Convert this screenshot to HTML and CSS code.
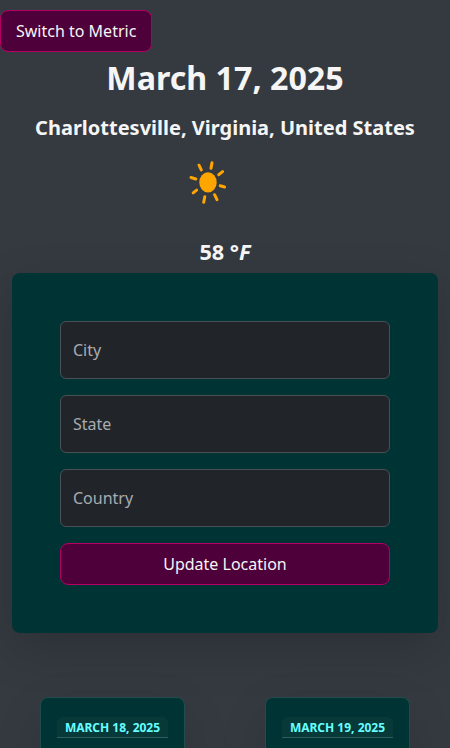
FILE: index.html
```
<!DOCTYPE html>
<html lang="en">
<head>
<meta charset="utf-8">
<meta name="viewport" content="width=device-width, initial-scale=1">
<title>Weather Forecast</title>
<link rel="stylesheet" href="styles.css">
</head>
<body>
<button class="btn unit-toggle" type="button">Switch to Metric</button>
<main>
  <section class="current">
    <h1>March 17, 2025</h1>
    <h2>Charlottesville, Virginia, United States</h2>
    <svg class="sun" width="60" height="60" viewBox="180 150 60 60" aria-hidden="true">
      <ellipse cx="208" cy="182.4" rx="8.7" ry="10.2"/>
      <path d="M212 162.7L211 168.2M222.6 171.6L218.8 174.7M220.2 185.7L224.6 187M214.6 194.7L217 199.6M204.8 196.8L203.7 202.2M196.6 190.2L193.2 192.9M195.8 179L191 177.5M199 165.2L201.3 169.9"/>
    </svg>
    <p class="temperature">58 °<em>F</em></p>
  </section>
  <form class="location">
    <input type="text" placeholder="City" aria-label="City">
    <input type="text" placeholder="State" aria-label="State">
    <input type="text" placeholder="Country" aria-label="Country">
    <button class="btn" type="button">Update Location</button>
  </form>
  <section class="forecast">
    <article class="day"><h3>March 18, 2025</h3></article>
    <article class="day"><h3>March 19, 2025</h3></article>
  </section>
</main>
</body>
</html>
```
FILE: styles.css
```
* { box-sizing: border-box; }
html, body { height: 100%; }
body {
  margin: 0;
  padding-top: 10px;
  overflow: hidden;
  background: #353a41;
  color: #f5f5f5;
  font: 16px/24px "Noto Sans", sans-serif;
}
.btn {
  display: block;
  height: 42px;
  padding: 0 15px;
  border: 1px solid #b30062;
  border-radius: 8px;
  background: #4d0039;
  color: #f5f5f5;
  font: inherit;
}
.current {
  display: flex;
  flex-direction: column;
  align-items: center;
  height: 221px;
}
h1, h2, h3, p { margin: 0; }
h1 { margin-top: 7px; font-size: 32.2px; line-height: 38px; }
h2 { margin-top: 19px; font-size: 20px; line-height: 24px; }
.sun {
  margin: 10px 30px 0 0;
  fill: #ffa500;
}
.sun path { stroke: #ffa500; stroke-width: 3; stroke-linecap: round; }
.temperature { margin-top: 29px; font-size: 21.7px; line-height: 26px; font-weight: 700; }
.location {
  display: flex;
  flex-direction: column;
  gap: 16px;
  height: 360px;
  margin: 0 12px;
  padding: 48px;
  border-radius: 8px;
  background: #003333;
  box-shadow: 0 16px 48px rgba(0, 0, 0, .176);
}
.location input {
  width: 100%;
  height: 58px;
  padding: 0 12px;
  border: 1px solid #495057;
  border-radius: 6px;
  background: #212529;
  color: #dee2e6;
  font: inherit;
}
.location input::placeholder { color: #a7acb1; opacity: 1; }
.forecast {
  display: grid;
  grid-template-columns: 1fr 1fr;
  justify-items: center;
  padding-top: 64px;
}
.day {
  width: 145px;
  height: 260px;
  padding: 19px 16px;
  border: 1px solid #1f4d4d;
  border-radius: 8px;
  background: #003333;
  box-shadow: 0 16px 48px rgba(0, 0, 0, .12);
}
.day h3 {
  height: 21px;
  border-bottom: 1px solid #335c5c;
  border-radius: 6px 6px 0 0;
  background: #083939;
  color: #66ffff;
  font-size: 12px;
  line-height: 21px;
  text-align: center;
  text-transform: uppercase;
  white-space: nowrap;
}
```
